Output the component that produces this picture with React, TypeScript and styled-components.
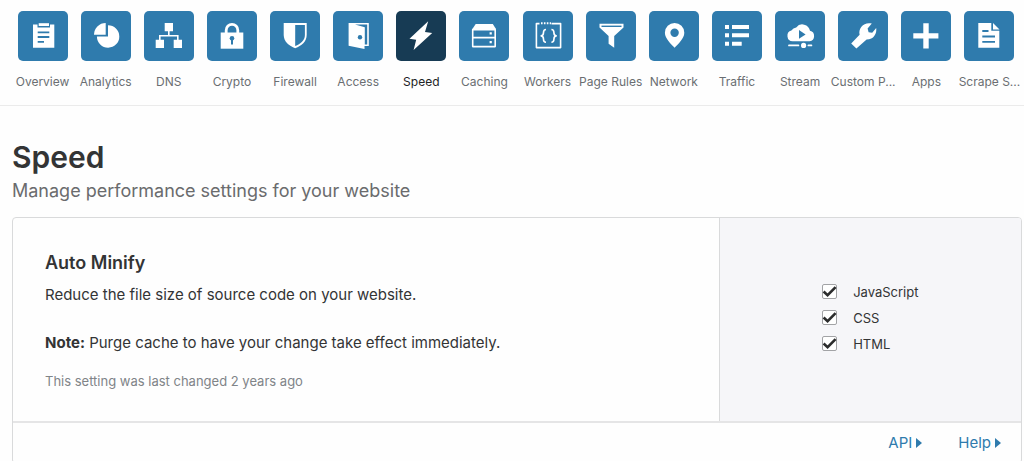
import React, { ReactNode } from "react";
import styled, { createGlobalStyle } from "styled-components";

const blue = "#2f7bad";
const navy = "#173b54";

const GlobalStyle = createGlobalStyle`
  *, *::before, *::after { box-sizing: border-box; }
  body {
    margin: 0;
    background: #fefefe;
    color: #333435;
    font-family: Inter, "Liberation Sans", sans-serif;
    font-size: 15px;
  }
`;

const Nav = styled.nav`
  display: flex;
  padding: 11px 3px 15px 11px;
  border-bottom: 1px solid #ebebeb;
`;

const NavButton = styled.button<{ $active?: boolean }>`
  flex: 1 1 0;
  min-width: 0;
  display: flex;
  flex-direction: column;
  align-items: center;
  gap: 13px;
  padding: 0;
  border: 0;
  background: none;
  font: inherit;
  font-size: 12px;
  line-height: 16px;
  white-space: nowrap;
  cursor: pointer;
  color: ${(p) => (p.$active ? "#222324" : "#6a6e72")};
`;

const Tile = styled.span<{ $active?: boolean }>`
  display: block;
  width: 50px;
  height: 50px;
  border-radius: 5px;
  color: ${(p) => (p.$active ? navy : blue)};
  background: currentColor;
`;

const Main = styled.main`
  padding: 33px 2px 0 12px;
`;

const Title = styled.h1`
  margin: 0 0 4px;
  font-size: 30px;
  line-height: 36px;
  font-weight: 600;
`;

const Subtitle = styled.p`
  margin: 0 0 14px;
  font-size: 18px;
  line-height: 24px;
  color: #6a6b6d;
`;

const Card = styled.section`
  border: 1px solid #d9dadb;
  border-radius: 4px;
  overflow: hidden;
  background: #fefefe;
`;

const CardBody = styled.div`
  display: grid;
  grid-template-columns: 7fr 3fr;
`;

const Description = styled.div`
  padding: 33px 32px 30px;
`;

const CardTitle = styled.h2`
  margin: 0 0 8px;
  font-size: 18px;
  line-height: 24px;
  font-weight: 600;
`;

const Text = styled.p`
  margin: 0 0 24px;
  line-height: 24px;
`;

const Changed = styled.p`
  margin: -8px 0 0;
  font-size: 13px;
  line-height: 20px;
  color: #808488;
`;

const Controls = styled.div`
  display: flex;
  align-items: center;
  justify-content: center;
  padding-bottom: 4px;
  background: #f6f6f9;
  border-left: 1px solid #d9dadb;
`;

const Options = styled.div`
  display: grid;
  gap: 6px;
`;

const Option = styled.label`
  display: flex;
  align-items: center;
  gap: 16px;
  font-size: 13px;
  line-height: 20px;
`;

const CheckBox = styled.span`
  display: grid;
  width: 15px;
  height: 15px;

  & > * {
    grid-area: 1 / 1;
  }
`;

const CheckInput = styled.input`
  appearance: none;
  width: 15px;
  height: 15px;
  margin: 0;
  border: 1px solid #a2a3a6;
  border-radius: 2px;
  background: #fff;

  & + svg {
    visibility: hidden;
    pointer-events: none;
  }
  &:checked + svg {
    visibility: visible;
  }
`;

const CardFooter = styled.footer`
  display: flex;
  justify-content: flex-end;
  gap: 36px;
  padding: 8px 20px;
  border-top: 2px solid #e5e5e6;
`;

const FooterLink = styled.a`
  display: flex;
  align-items: center;
  gap: 4px;
  font-size: 15px;
  line-height: 24px;
  color: ${blue};
  text-decoration: none;
`;

/* Icons share a 50-unit box; "currentColor" is the tile colour behind them. */
const Icon = ({ children }: { children: ReactNode }) => (
  <svg width="50" height="50" viewBox="0 0 50 50" fill="#fff" aria-hidden="true">
    {children}
  </svg>
);

const items: { name: string; active?: boolean; icon: ReactNode }[] = [
  {
    name: "Overview",
    icon: (
      <>
        <path d="M15 13.5H19.5V16.5H32V13.5H36.3V36.7H15Z" />
        <path d="M20.7 12.2H31V15H20.7Z" />
        <path d="M19.7 21.4H31.3M19.7 26H31.3M19.7 30.8H26" stroke="currentColor" strokeWidth="1.8" />
      </>
    ),
  },
  {
    name: "Analytics",
    icon: (
      <>
        <path d="M27 14.3A11.2 11.2 0 1 1 15.9 25.6H27Z" />
        <path d="M24.7 12V23.7H13A11.7 11.7 0 0 1 24.7 12Z" />
      </>
    ),
  },
  {
    name: "DNS",
    icon: (
      <>
        <path d="M20.7 12H29V20.3H20.7ZM11.7 28.7H20V37H11.7ZM29.7 28.7H38V37H29.7Z" />
        <path d="M24.8 20V24.8M15.8 29V24.8H33.8V29" fill="none" stroke="#fff" strokeWidth="1.6" />
      </>
    ),
  },
  {
    name: "Crypto",
    icon: (
      <>
        <path d="M13.7 21.5H36.3V37.7H13.7Z" />
        <path d="M19.2 22V19.2A5.8 5.8 0 0 1 30.8 19.2V22" fill="none" stroke="#fff" strokeWidth="2.8" />
        <circle cx="25" cy="27.3" r="2.3" fill="currentColor" />
        <path d="M25 28V33.5" stroke="currentColor" strokeWidth="2" />
      </>
    ),
  },
  {
    name: "Firewall",
    icon: (
      <>
        <path d="M13.7 12H36.7V24C36.7 30.5 31.5 35 25.2 37.2C19 35 13.7 30.5 13.7 24Z" />
        <path d="M25.2 14H34.9V24C34.9 29.5 30.5 33 25.2 35Z" fill="currentColor" />
      </>
    ),
  },
  {
    name: "Access",
    icon: (
      <>
        <path d="M15.6 12H35.8V35H31.5V38L15.6 34.8Z" />
        <path d="M22 13.6H34.2V33.6H31.8V16.2Z" fill="currentColor" />
        <circle cx="27" cy="26.2" r="2.2" fill="currentColor" />
      </>
    ),
  },
  {
    name: "Speed",
    active: true,
    icon: <path d="M32.2 10.3L13.5 27.7L20.2 28.7L17.6 39L36.2 22L29 21Z" />,
  },
  {
    name: "Caching",
    icon: (
      <>
        <path d="M16.7 13H33.8L37 18H13.4Z" />
        <path
          d="M13.7 18.6H36.2V26.6H13.7ZM13.7 26.6H36.2V35.6H13.7Z"
          fill="none"
          stroke="#fff"
          strokeWidth="1.6"
          strokeLinejoin="round"
        />
        <path d="M30.6 21.3H32.8V23.5H30.6ZM30.6 30H32.8V32.2H30.6Z" />
      </>
    ),
  },
  {
    name: "Workers",
    icon: (
      <g fill="none" stroke="#fff" strokeWidth="1.6" strokeLinejoin="round">
        <path d="M28.5 12.6H37.6V36.6H13.4V12.6H16.5" />
        <path d="M18 12.3H28" strokeWidth="2" strokeDasharray="1.6 1.3" />
        <path d="M23 18.5C20.8 18.5 20.5 19.5 20.5 21.5C20.5 23.6 20.2 24.7 18.2 24.9C20.2 25.1 20.5 26.2 20.5 28.3C20.5 30.3 20.8 31.3 23 31.3" />
        <path d="M28.4 18.5C30.6 18.5 30.9 19.5 30.9 21.5C30.9 23.6 31.2 24.7 33.2 24.9C31.2 25.1 30.9 26.2 30.9 28.3C30.9 30.3 30.6 31.3 28.4 31.3" />
      </g>
    ),
  },
  {
    name: "Page Rules",
    icon: (
      <>
        <path d="M13.5 12.7H37.5V16.5L28.2 25V36.8L22.6 32.8V25L13.5 16.5Z" />
        <path d="M15.5 15.3H35.5" stroke="currentColor" strokeWidth="1.4" />
      </>
    ),
  },
  {
    name: "Network",
    icon: (
      <>
        <path d="M25.6 12A9.7 9.7 0 0 1 35.3 21.7C35.3 27.5 29 33 25.6 36.8C22.2 33 15.9 27.5 15.9 21.7A9.7 9.7 0 0 1 25.6 12Z" />
        <circle cx="25.6" cy="21.8" r="4.2" fill="currentColor" />
      </>
    ),
  },
  {
    name: "Traffic",
    icon: (
      <path d="M13 14H17V18H13ZM20 14H37V18H20ZM13 22.3H17V26.3H13ZM20 22.3H37V26.3H20ZM13 30.7H17V34.7H13ZM20 30.7H29.7V34.7H20Z" />
    ),
  },
  {
    name: "Stream",
    icon: (
      <>
        <path d="M17.6 30.2A5.4 5.4 0 0 1 16.4 19.6A7.6 7.6 0 0 1 21.2 16.4A7.8 7.8 0 0 1 35 19.8A5.3 5.3 0 0 1 34.6 30.2Z" />
        <path d="M24 19L30.6 23.5L24 27.8Z" fill="currentColor" />
        <path d="M14 34.4H23.4M33.4 34.4H36.4" stroke="#fff" strokeWidth="1.8" strokeLinecap="round" />
        <circle cx="28.6" cy="34.4" r="2.6" />
      </>
    ),
  },
  {
    name: "Custom P...",
    icon: (
      <path d="M33.8 12.6L29.6 17.6L30.6 21.2L34.2 21.8L38.2 17C39 22.5 35.8 28.6 28.6 28.6L18.4 37.4L13.2 32.6L21.6 23.8C20 16.6 26.4 10.6 33.8 12.6Z" />
    ),
  },
  {
    name: "Apps",
    icon: <path d="M22.3 12.3H27.7V22.2H37.4V27.4H27.7V37.4H22.3V27.4H12.3V22.2H22.3Z" />,
  },
  {
    name: "Scrape S...",
    icon: (
      <>
        <path d="M14.3 12H27.3V19.8H35.3V36.8H14.3Z" />
        <path d="M29 12L35.5 18.4H29Z" />
        <path d="M18.3 20H24.5M18.3 25.5H31M18.3 30.8H31" stroke="currentColor" strokeWidth="1.8" />
      </>
    ),
  },
];

const Arrow = () => (
  <svg width="6" height="10" viewBox="0 0 6 10" fill={blue} aria-hidden="true">
    <path d="M0 0L6 5L0 10Z" />
  </svg>
);

export default function App() {
  return (
    <>
      <GlobalStyle />
      <Nav>
        {items.map(({ name, active, icon }) => (
          <NavButton key={name} $active={active} aria-current={active ? "page" : undefined}>
            <Tile $active={active}>
              <Icon>{icon}</Icon>
            </Tile>
            <span>{name}</span>
          </NavButton>
        ))}
      </Nav>
      <Main>
        <Title>Speed</Title>
        <Subtitle>Manage performance settings for your website</Subtitle>
        <Card>
          <CardBody>
            <Description>
              <CardTitle>Auto Minify</CardTitle>
              <Text>Reduce the file size of source code on your website.</Text>
              <Text>
                <strong>Note:</strong> Purge cache to have your change take effect immediately.
              </Text>
              <Changed>This setting was last changed 2 years ago</Changed>
            </Description>
            <Controls>
              <Options>
                {["JavaScript", "CSS", "HTML"].map((name) => (
                  <Option key={name}>
                    <CheckBox>
                      <CheckInput type="checkbox" defaultChecked />
                      <svg width="15" height="15" viewBox="0 0 15 15" fill="none" aria-hidden="true">
                        <path d="M1.6 7.5L5.6 11.2L13.6 3.2" stroke="#2b2c2d" strokeWidth="2.6" />
                      </svg>
                    </CheckBox>
                    {name}
                  </Option>
                ))}
              </Options>
            </Controls>
          </CardBody>
          <CardFooter>
            <FooterLink href="#api">
              API
              <Arrow />
            </FooterLink>
            <FooterLink href="#help">
              Help
              <Arrow />
            </FooterLink>
          </CardFooter>
        </Card>
      </Main>
    </>
  );
}
